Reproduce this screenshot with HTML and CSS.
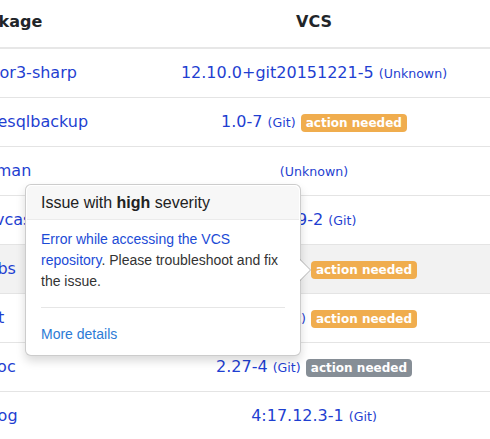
FILE: index.html
```html
<!DOCTYPE html>
<html lang="en">
<head>
<meta charset="utf-8">
<title>VCS status</title>
<link rel="stylesheet" href="styles.css">
</head>
<body>
<div class="viewport">
  <table class="pkg-table">
    <colgroup>
      <col class="w-pkg">
      <col class="w-vcs">
      <col class="w-extra">
    </colgroup>
    <thead>
      <tr><th class="col-pkg">Package</th><th class="col-vcs">VCS</th><th></th></tr>
    </thead>
    <tbody>
      <tr>
        <td class="col-pkg"><a href="#">veclor3-sharp</a></td>
        <td class="col-vcs"><a href="#">12.10.0+git20151221-5</a> <small><a href="#">(Unknown)</a></small></td>
        <td></td>
      </tr>
      <tr>
        <td class="col-pkg"><a href="#">phpesqlbackup</a></td>
        <td class="col-vcs"><a href="#">1.0-7</a> <small><a href="#">(Git)</a></small> <span class="badge badge-warning">action needed</span></td>
        <td></td>
      </tr>
      <tr>
        <td class="col-pkg"><a href="#">pacman</a></td>
        <td class="col-vcs"><small><a href="#">(Unknown)</a></small></td>
        <td></td>
      </tr>
      <tr>
        <td class="col-pkg"><a href="#">svnvcastool</a></td>
        <td class="col-vcs"><a href="#">0.19-2</a> <small><a href="#">(Git)</a></small></td>
        <td></td>
      </tr>
      <tr class="is-hover">
        <td class="col-pkg"><a href="#">gnubs</a></td>
        <td class="col-vcs"><a href="#">10.23-1</a> <small><a href="#">(Git)</a></small> <span class="badge badge-warning">action needed</span></td>
        <td></td>
      </tr>
      <tr>
        <td class="col-pkg"><a href="#">perlt</a></td>
        <td class="col-vcs"><a href="#">11.05-2</a> <small><a href="#">(Git)</a></small> <span class="badge badge-warning">action needed</span></td>
        <td></td>
      </tr>
      <tr>
        <td class="col-pkg"><a href="#">godoc</a></td>
        <td class="col-vcs"><a href="#">2.27-4</a> <small><a href="#">(Git)</a></small> <span class="badge badge-secondary">action needed</span></td>
        <td></td>
      </tr>
      <tr>
        <td class="col-pkg"><a href="#">syslog</a></td>
        <td class="col-vcs"><a href="#">4:17.12.3-1</a> <small><a href="#">(Git)</a></small></td>
        <td></td>
      </tr>
    </tbody>
  </table>

  <div class="popover">
    <h3 class="popover-title">Issue with <b>high</b> severity</h3>
    <div class="popover-content">
      <p><a class="pop-link" href="#">Error while accessing the VCS repository</a>. Please troubleshoot and fix the issue.</p>
      <hr>
      <a class="more-link" href="#">More details</a>
    </div>
  </div>
</div>
</body>
</html>
```

FILE: styles.css
```css
html, body {
  margin: 0;
  padding: 0;
}

body {
  font-family: "DejaVu Sans", sans-serif;
  font-size: 16px;
  color: #212529;
  background: #fff;
  overflow: hidden;
}

.viewport {
  position: relative;
  width: 490px;
  height: 439px;
  overflow: hidden;
}

a {
  color: #1f3fd1;
  text-decoration: none;
}

.pkg-table {
  border-collapse: separate;
  border-spacing: 0;
  table-layout: fixed;
  width: 600px;
  margin-left: -45px;
}

.w-pkg { width: 185px; }
.w-vcs { width: 348px; }
.w-extra { width: 67px; }

.pkg-table th {
  height: 24px;
  padding: 10px 12px 13px;
  line-height: 24px;
  font-weight: bold;
  border-bottom: 2px solid #e7e7e7;
  white-space: nowrap;
}

.pkg-table td {
  height: 24px;
  padding: 12px;
  line-height: 24px;
  border-bottom: 1px solid #e4e4e4;
  white-space: nowrap;
  overflow: hidden;
}

.col-pkg { text-align: left; }
.col-vcs { text-align: center; }

.pkg-table tr.is-hover td {
  background: #f2f2f2;
}

small {
  font-size: 12.6px;
  line-height: 1;
}

.badge {
  display: inline-block;
  padding: 3px 5px;
  font-size: 12px;
  font-weight: bold;
  line-height: 1;
  color: #fff;
  border-radius: 4px;
  white-space: nowrap;
}

.badge-warning { background: #f0ad4e; }
.badge-secondary { background: #868e96; }

/* Popover */
.popover {
  position: absolute;
  left: 25px;
  top: 184px;
  width: 276px;
  box-sizing: border-box;
  padding: 1px;
  background: #fff;
  border: 1px solid rgba(0, 0, 0, 0.2);
  border-radius: 6px;
  box-shadow: 0 5px 10px rgba(0, 0, 0, 0.15);
  font-family: "Liberation Sans", Arial, sans-serif;
  font-size: 14px;
  line-height: 21px;
  color: #333;
}

.popover::before {
  content: "";
  position: absolute;
  top: 50%;
  right: -11px;
  margin-top: -11px;
  border-style: solid;
  border-width: 11px 0 11px 11px;
  border-color: transparent transparent transparent rgba(0, 0, 0, 0.25);
}

.popover::after {
  content: "";
  position: absolute;
  top: 50%;
  right: -10px;
  margin-top: -10px;
  border-style: solid;
  border-width: 10px 0 10px 10px;
  border-color: transparent transparent transparent #fff;
}

.popover-title {
  margin: 0;
  padding: 7px 14px;
  font-size: 16px;
  line-height: 19px;
  font-weight: normal;
  color: #222;
  background: #f7f7f7;
  border-bottom: 1px solid #ebebeb;
  border-radius: 5px 5px 0 0;
}

.popover-content {
  padding: 9px 14px;
}

.popover-content p {
  margin: 0;
}

.popover-content hr {
  margin: 15px 0 16px;
  border: 0;
  border-top: 1px solid #e6e6e6;
  height: 0;
}

.pop-link { color: #1c4bd6; }
.more-link { color: #2c7bd6; }
```
